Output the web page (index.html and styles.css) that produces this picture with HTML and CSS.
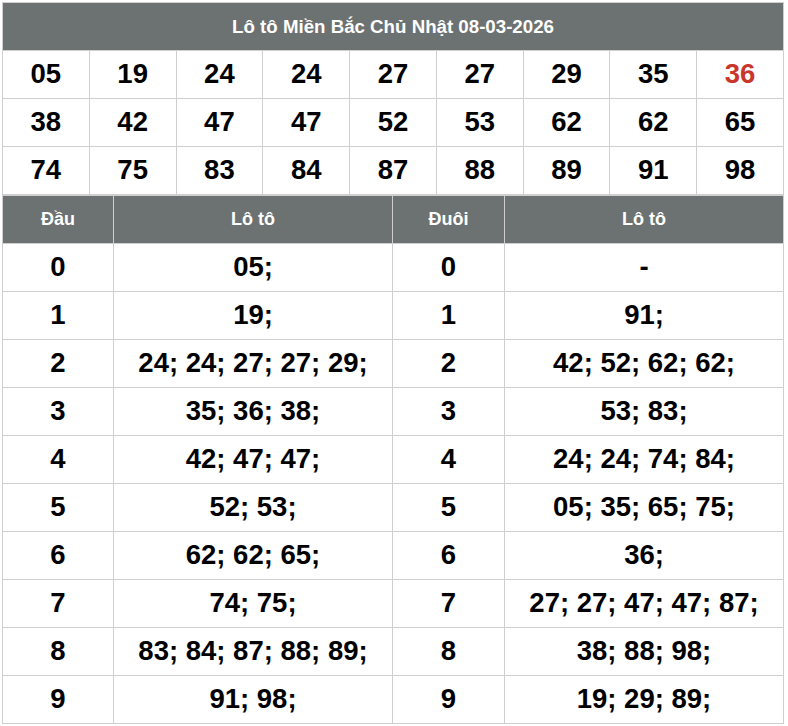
FILE: index.html
```html
<!DOCTYPE html>
<html lang="vi">
<head>
<meta charset="utf-8">
<title>Lô tô Miền Bắc</title>
<link rel="stylesheet" href="styles.css">
</head>
<body>
<div class="wrap">
  <table class="loto">
    <thead>
      <tr><th colspan="9" class="title">Lô tô Miền Bắc Chủ Nhật 08-03-2026</th></tr>
    </thead>
    <tbody>
      <tr><td>05</td><td>19</td><td>24</td><td>24</td><td>27</td><td>27</td><td>29</td><td>35</td><td class="red">36</td></tr>
      <tr><td>38</td><td>42</td><td>47</td><td>47</td><td>52</td><td>53</td><td>62</td><td>62</td><td>65</td></tr>
      <tr><td>74</td><td>75</td><td>83</td><td>84</td><td>87</td><td>88</td><td>89</td><td>91</td><td>98</td></tr>
    </tbody>
  </table>
  <table class="dauduoi">
    <colgroup>
      <col class="c-key"><col class="c-val"><col class="c-key2"><col class="c-val">
    </colgroup>
    <thead>
      <tr><th>Đầu</th><th>Lô tô</th><th>Đuôi</th><th>Lô tô</th></tr>
    </thead>
    <tbody>
      <tr><td>0</td><td>05;</td><td>0</td><td>-</td></tr>
      <tr><td>1</td><td>19;</td><td>1</td><td>91;</td></tr>
      <tr><td>2</td><td>24; 24; 27; 27; 29;</td><td>2</td><td>42; 52; 62; 62;</td></tr>
      <tr><td>3</td><td>35; 36; 38;</td><td>3</td><td>53; 83;</td></tr>
      <tr><td>4</td><td>42; 47; 47;</td><td>4</td><td>24; 24; 74; 84;</td></tr>
      <tr><td>5</td><td>52; 53;</td><td>5</td><td>05; 35; 65; 75;</td></tr>
      <tr><td>6</td><td>62; 62; 65;</td><td>6</td><td>36;</td></tr>
      <tr><td>7</td><td>74; 75;</td><td>7</td><td>27; 27; 47; 47; 87;</td></tr>
      <tr><td>8</td><td>83; 84; 87; 88; 89;</td><td>8</td><td>38; 88; 98;</td></tr>
      <tr><td>9</td><td>91; 98;</td><td>9</td><td>19; 29; 89;</td></tr>
    </tbody>
  </table>
</div>
</body>
</html>
```

FILE: styles.css
```css
html, body {
  margin: 0;
  padding: 0;
  background: #ffffff;
}
body {
  font-family: "Liberation Sans", Arial, sans-serif;
  color: #000;
}
.wrap {
  padding: 2px 0 0 2px;
  width: 782px;
}
table {
  width: 782px;
  border-collapse: collapse;
  table-layout: fixed;
}
th, td {
  border: 1px solid #cfcfcf;
  text-align: center;
  vertical-align: middle;
  padding: 0;
  font-weight: bold;
}
th {
  background: #6c7272;
  color: #ffffff;
  font-size: 18px;
  height: 47px;
}
th.title {
  font-size: 18.7px;
}
td {
  font-size: 27.5px;
  height: 45px;
  padding-bottom: 2px;
}
.red {
  color: #c9372c;
}
.c-key { width: 111px; }
.c-key2 { width: 112px; }
.c-val { width: auto; }
```
